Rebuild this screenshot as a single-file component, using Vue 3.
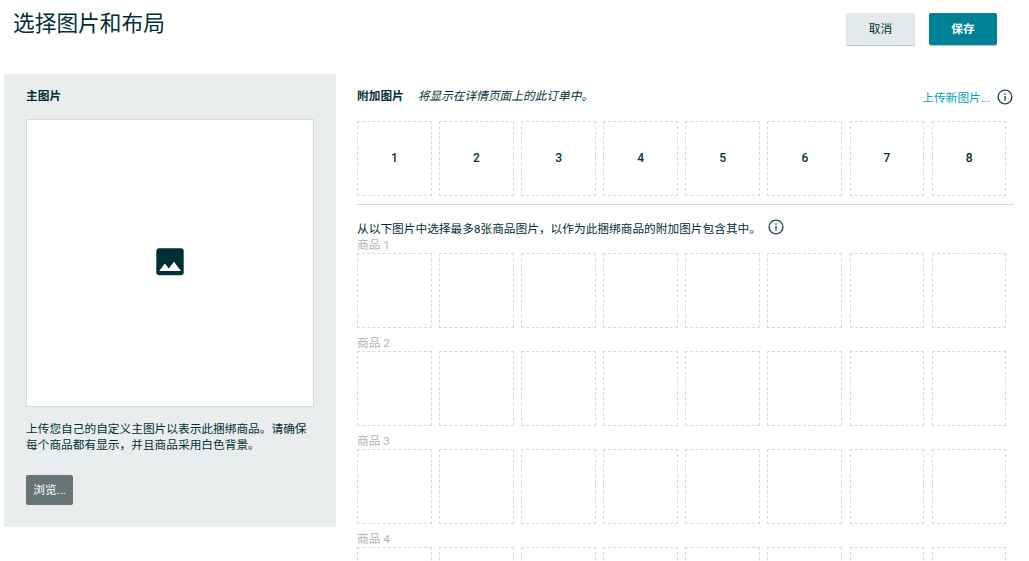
<template>
  <div class="page">
    <header class="header">
      <h1>选择图片和布局</h1>
      <div class="actions">
        <button class="btn btn-cancel">取消</button>
        <button class="btn btn-save">保存</button>
      </div>
    </header>

    <main class="content">
      <section class="main-image">
        <h2>主图片</h2>
        <div class="preview">
          <svg width="28" height="28" viewBox="0 0 28 28">
            <rect x="0.3" y="0.3" width="27.4" height="27" rx="3" fill="#002f36" />
            <path d="M3.2 23 L8.9 15.6 L12.8 20.6 L18 13.8 L25 23 Z" fill="#fff" />
          </svg>
        </div>
        <p class="hint">上传您自己的自定义主图片以表示此捆绑商品。请确保每个商品都有显示，并且商品采用白色背景。</p>
        <button class="browse">浏览...</button>
      </section>

      <section class="extra">
        <div class="extra-header">
          <h2>附加图片</h2>
          <em>将显示在详情页面上的此订单中。</em>
          <a class="upload">上传新图片...</a>
          <svg class="info" viewBox="0 0 16 16">
            <circle cx="8" cy="8" r="6.9" />
            <path d="M8 7v4.6M8 4.3v1.5" />
          </svg>
        </div>

        <div class="slots">
          <div v-for="n in slotCount" :key="n" class="slot">{{ n }}</div>
        </div>

        <div class="pick">
          <span>从以下图片中选择最多8张商品图片，以作为此捆绑商品的附加图片包含其中。</span>
          <svg class="info" viewBox="0 0 16 16">
            <circle cx="8" cy="8" r="6.9" />
            <path d="M8 7v4.6M8 4.3v1.5" />
          </svg>
        </div>

        <div v-for="product in products" :key="product" class="product">
          <div class="product-name">商品 {{ product }}</div>
          <div class="slots">
            <div v-for="n in slotCount" :key="n" class="slot"></div>
          </div>
        </div>
      </section>
    </main>
  </div>
</template>

<script setup>
import { ref } from 'vue'

const slotCount = 8
const products = ref([1, 2, 3, 4])
</script>

<style>
body {
  margin: 0;
  overflow: hidden;
}
</style>

<style scoped>
.page {
  box-sizing: border-box;
  width: 1029px;
  height: 561px;
  overflow: hidden;
  background: #fff;
  color: #002f36;
  font-family: Roboto, "Noto Sans CJK SC", sans-serif;
  font-size: 11.7px;
  line-height: 16px;
}

.header {
  display: flex;
  justify-content: space-between;
  height: 74px;
  padding: 0 32px 0 13px;
}

h1 {
  margin: 8px 0 0;
  font-size: 21.7px;
  font-weight: normal;
  line-height: 32px;
}

h2 {
  margin: 0;
  font-size: 11.7px;
  font-weight: bold;
  line-height: 16px;
}

.actions {
  display: flex;
  gap: 14px;
  padding-top: 13px;
}

.btn {
  height: 32px;
  padding: 0 0 3px;
  border: none;
  border-radius: 2px;
  font-family: inherit;
  font-size: 11.7px;
  box-shadow: 0 1px 1px rgba(0, 47, 54, 0.3);
}

.btn-cancel {
  width: 69px;
  background: #e3eaeb;
  color: #002f36;
}

.btn-save {
  width: 68px;
  background: #008296;
  color: #fff;
  font-weight: bold;
}

.content {
  display: flex;
  align-items: flex-start;
}

.main-image {
  box-sizing: border-box;
  width: 332px;
  height: 453px;
  margin-left: 4px;
  padding: 14px 22px 0;
  background: #e9edee;
}

.preview {
  box-sizing: border-box;
  display: flex;
  align-items: center;
  justify-content: center;
  height: 288px;
  margin-top: 15px;
  padding-bottom: 3px;
  border: 1px solid #d5dbdb;
  background: #fff;
}

.hint {
  margin: 14px 0 22px;
}

.browse {
  display: block;
  width: 47px;
  height: 30px;
  padding: 0 0 3px;
  border: none;
  border-radius: 2px;
  background: #687575;
  color: #fff;
  font-family: inherit;
  font-size: 11.7px;
}

.extra {
  width: 657px;
  margin-left: 21px;
}

.extra-header {
  display: flex;
  align-items: center;
  height: 16px;
  padding: 14px 1px 17px 0;
}

.extra-header em {
  margin-left: 14px;
}

.upload {
  margin: 4px 7px 0 auto;
  color: #00a2b4;
}

.extra-header .info {
  margin-top: 1px;
}

.info {
  width: 16px;
  height: 16px;
  fill: none;
  stroke: #1f474d;
  stroke-width: 1.4;
}

.slots {
  display: grid;
  grid-template-columns: repeat(8, 74.8px);
  column-gap: 7.3px;
}

.slot {
  box-sizing: border-box;
  display: flex;
  align-items: center;
  justify-content: center;
  height: 75px;
  padding-bottom: 1px;
  border: 1px dashed #d5dbdb;
  font-size: 12px;
  font-weight: 500;
}

.pick {
  display: flex;
  align-items: center;
  height: 16px;
  margin-top: 8px;
  padding: 15px 0 1px;
  border-top: 1px solid #d5dbdb;
}

.pick span {
  margin-top: 2px;
}

.pick .info {
  margin: -2px 0 0 7px;
}

.product {
  margin-bottom: 7px;
}

.product-name {
  height: 16px;
  color: #aab7b8;
}
</style>
